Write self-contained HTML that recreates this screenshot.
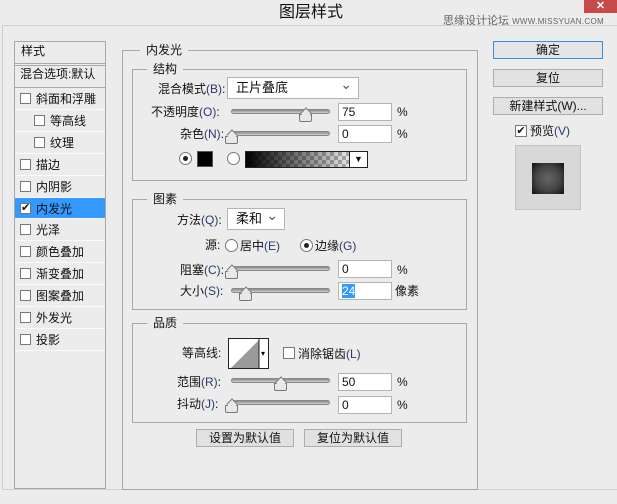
<!DOCTYPE html>
<html><head><meta charset="utf-8"><style>
*{box-sizing:border-box;margin:0;padding:0}
body{width:617px;height:504px;background:#ececec;font-family:"Liberation Sans","Noto Sans CJK SC",sans-serif;font-size:12px;color:#111;position:relative;overflow:hidden}
.a{position:absolute}
.t{position:absolute;white-space:nowrap;line-height:14px}
.box{position:absolute;border:1px solid #a8a8a8}
.leg{position:absolute;background:#ececec;padding:0 6px;line-height:14px}
.cb{position:absolute;width:11px;height:11px;border:1px solid #777;background:#fff}
.row{position:absolute;left:15px;width:90px;height:22px;border-bottom:1px solid #fafafa}
.row .cb{left:5px;top:5px}
.row .t{left:21px;top:4px}
.sl{position:absolute;height:5px;border-radius:3px;background:linear-gradient(#8a8a8a,#cfcfcf);border:1px solid #888}
.th{position:absolute;width:13px;height:8px;background:#e8e8e8;border:1px solid #777;border-radius:0 0 2px 2px}
.th:before{content:"";position:absolute;left:2px;top:-6px;width:7px;height:7px;border-left:1px solid #777;border-top:1px solid #777;background:#e8e8e8;transform:rotate(45deg)}
.in{position:absolute;height:18px;background:#fff;border:1px solid #b4b4b4;padding-left:3px;line-height:16px}
.btn{position:absolute;height:18px;border:1px solid #adadad;background:#e1e1e1;text-align:center;line-height:16px}
.rd{position:absolute;width:13px;height:13px;border-radius:50%;border:1px solid #777;background:#fff}
.rd.on:after{content:"";position:absolute;left:3px;top:3px;width:5px;height:5px;border-radius:50%;background:#222}
.sel{position:absolute;height:22px;background:#fff;border:1px solid #b4b4b4;padding-left:8px;line-height:20px;font-size:13px}
.sel:after{content:"⌄";position:absolute;right:6px;top:-4px;color:#555;font-size:14px}
b{font-weight:normal;color:#2a3a6a}
</style></head><body>
<div class="t" style="left:279px;top:4px;font-size:16px;line-height:18px">图层样式</div>
<div class="t" style="left:443px;top:14px;font-size:11px;color:#666">思缘设计论坛 <span style="font-size:8px;letter-spacing:0.3px">WWW.MISSYUAN.COM</span></div>
<div class="a" style="left:584px;top:0;width:33px;height:13px;background:#c8494a;color:#fff;text-align:center;line-height:12px;font-size:11px;font-weight:bold">✕</div>
<div class="box" style="left:2px;top:25px;width:618px;height:465px;border-color:#cfcfcf"></div>

<div class="box" style="left:14px;top:41px;width:92px;height:448px;background:#ececec"></div>
<div class="t" style="left:21px;top:44px">样式</div>
<div class="a" style="left:15px;top:63px;width:90px;height:3px;border-top:1px solid #aaa;border-bottom:1px solid #aaa"></div>
<div class="t" style="left:20px;top:67px">混合选项:默认</div>
<div class="a" style="left:15px;top:87px;width:90px;height:1px;background:#aaa"></div>
<div class="row" style="top:88px"><div class="cb"></div><div class="t">斜面和浮雕</div></div>
<div class="row" style="top:110px"><div class="cb" style="left:19px"></div><div class="t" style="left:35px">等高线</div></div>
<div class="row" style="top:132px"><div class="cb" style="left:19px"></div><div class="t" style="left:35px">纹理</div></div>
<div class="row" style="top:154px"><div class="cb"></div><div class="t">描边</div></div>
<div class="row" style="top:176px"><div class="cb"></div><div class="t">内阴影</div></div>
<div class="row" style="top:198px;background:#3399ff;height:21px"><div class="cb" style="font-size:11px;line-height:9px;text-align:center">✔</div><div class="t">内发光</div></div>
<div class="row" style="top:219px"><div class="cb"></div><div class="t">光泽</div></div>
<div class="row" style="top:241px"><div class="cb"></div><div class="t">颜色叠加</div></div>
<div class="row" style="top:263px"><div class="cb"></div><div class="t">渐变叠加</div></div>
<div class="row" style="top:285px"><div class="cb"></div><div class="t">图案叠加</div></div>
<div class="row" style="top:307px"><div class="cb"></div><div class="t">外发光</div></div>
<div class="row" style="top:329px"><div class="cb"></div><div class="t">投影</div></div>

<div class="box" style="left:122px;top:50px;width:356px;height:440px"></div>
<div class="leg" style="left:140px;top:43px">内发光</div>

<div class="box" style="left:132px;top:69px;width:335px;height:112px"></div>
<div class="leg" style="left:147px;top:62px">结构</div>
<div class="t" style="left:158px;top:82px">混合模式<b>(B)</b>:</div>
<div class="sel" style="left:227px;top:77px;width:132px">正片叠底</div>
<div class="t" style="left:151px;top:105px">不透明度<b>(O)</b>:</div>
<div class="sl" style="left:231px;top:109px;width:99px"></div><div class="th" style="left:299px;top:114px"></div>
<div class="in" style="left:338px;top:103px;width:54px">75</div><div class="t" style="left:397px;top:105px">%</div>
<div class="t" style="left:180px;top:127px">杂色<b>(N)</b>:</div>
<div class="sl" style="left:231px;top:131px;width:99px"></div><div class="th" style="left:225px;top:136px"></div>
<div class="in" style="left:338px;top:125px;width:54px">0</div><div class="t" style="left:397px;top:127px">%</div>
<div class="rd on" style="left:179px;top:152px"></div>
<div class="a" style="left:197px;top:151px;width:16px;height:16px;background:#000;border:1px solid #555"></div>
<div class="rd" style="left:227px;top:152px"></div>
<div class="a" style="left:245px;top:151px;width:123px;height:17px;border:1px solid #222;background:linear-gradient(90deg,#000,rgba(0,0,0,0) 94%),repeating-conic-gradient(#bbb 0 25%,#fff 0 50%) 0 0/8px 8px"></div>
<div class="a" style="left:349px;top:151px;width:19px;height:17px;border:1px solid #222;background:#fff;text-align:center;font-size:9px;line-height:15px">▼</div>

<div class="box" style="left:132px;top:199px;width:335px;height:111px"></div>
<div class="leg" style="left:147px;top:192px">图素</div>
<div class="t" style="left:177px;top:213px">方法<b>(Q)</b>:</div>
<div class="sel" style="left:227px;top:208px;width:58px">柔和</div>
<div class="t" style="left:205px;top:238px">源:</div>
<div class="rd" style="left:225px;top:239px"></div><div class="t" style="left:240px;top:239px">居中<b>(E)</b></div>
<div class="rd on" style="left:300px;top:239px"></div><div class="t" style="left:315px;top:239px">边缘<b>(G)</b></div>
<div class="t" style="left:180px;top:263px">阻塞<b>(C)</b>:</div>
<div class="sl" style="left:231px;top:266px;width:99px"></div><div class="th" style="left:225px;top:271px"></div>
<div class="in" style="left:338px;top:260px;width:54px">0</div><div class="t" style="left:397px;top:263px">%</div>
<div class="t" style="left:180px;top:284px">大小<b>(S)</b>:</div>
<div class="sl" style="left:231px;top:288px;width:99px"></div><div class="th" style="left:239px;top:293px"></div>
<div class="in" style="left:338px;top:282px;width:54px"><span style="background:#3399ff;color:#fff">24</span></div><div class="t" style="left:395px;top:284px">像素</div>

<div class="box" style="left:132px;top:323px;width:335px;height:100px"></div>
<div class="leg" style="left:147px;top:316px">品质</div>
<div class="t" style="left:182px;top:346px">等高线:</div>
<div class="a" style="left:228px;top:338px;width:41px;height:31px;border:1px solid #222;background:#fff;overflow:hidden">
<svg width="40" height="30" style="position:absolute;left:0;top:0"><polygon points="2,29 30,1 30,29" fill="#9a9a9a"/><line x1="30" y1="0" x2="30" y2="30" stroke="#222"/><text x="32" y="17" font-size="8">▾</text></svg></div>
<div class="cb" style="left:283px;top:347px;width:12px;height:12px"></div>
<div class="t" style="left:298px;top:347px">消除锯齿<b>(L)</b></div>
<div class="t" style="left:177px;top:375px">范围<b>(R)</b>:</div>
<div class="sl" style="left:231px;top:378px;width:99px"></div><div class="th" style="left:274px;top:383px"></div>
<div class="in" style="left:338px;top:373px;width:54px">50</div><div class="t" style="left:397px;top:375px">%</div>
<div class="t" style="left:177px;top:397px">抖动<b>(J)</b>:</div>
<div class="sl" style="left:231px;top:400px;width:99px"></div><div class="th" style="left:225px;top:405px"></div>
<div class="in" style="left:338px;top:396px;width:54px">0</div><div class="t" style="left:397px;top:398px">%</div>

<div class="btn" style="left:196px;top:429px;width:98px">设置为默认值</div>
<div class="btn" style="left:304px;top:429px;width:98px">复位为默认值</div>

<div class="btn" style="left:493px;top:41px;width:110px;border-color:#3c8fdb;background:#e5e5e5">确定</div>
<div class="btn" style="left:493px;top:69px;width:110px">复位</div>
<div class="btn" style="left:493px;top:97px;width:110px">新建样式<b style="color:#111">(W)...</b></div>
<div class="cb" style="left:515px;top:125px;width:12px;height:12px;font-size:11px;line-height:10px;text-align:center">✔</div>
<div class="t" style="left:530px;top:124px">预览<b>(V)</b></div>
<div class="a" style="left:515px;top:145px;width:66px;height:65px;background:#d8d8d8;border:1px solid #c4c4c4"></div>
<div class="a" style="left:532px;top:163px;width:32px;height:31px;background:radial-gradient(circle,#666 0,#444 55%,#111 100%)"></div>
</body></html>
